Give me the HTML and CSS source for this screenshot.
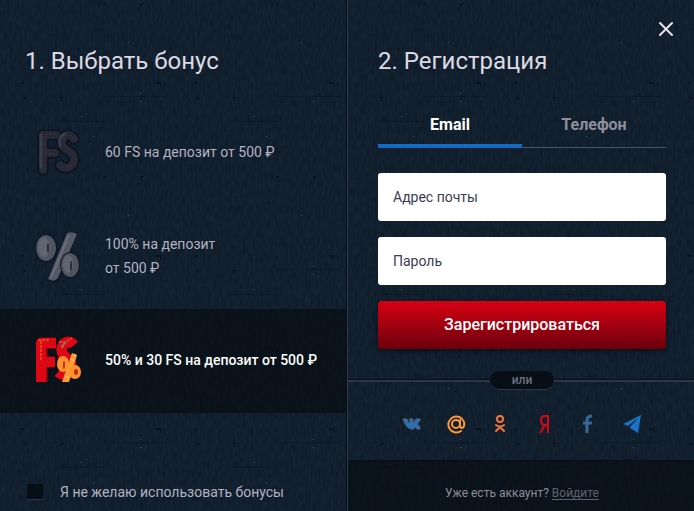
FILE: index.html
```html
<!DOCTYPE html>
<html lang="ru">
<head>
<meta charset="utf-8">
<meta name="viewport" content="width=device-width, initial-scale=1">
<title>Регистрация</title>
<link rel="stylesheet" href="styles.css">
</head>
<body>
<main class="modal">
  <section class="panel bonuses">
    <h2 class="title">1. Выбрать бонус</h2>
    <div class="options">
      <button type="button" class="option">
        <svg class="option-icon" viewBox="0 0 56 56" aria-hidden="true">
          <g fill="none" stroke-linecap="round" stroke-linejoin="round">
            <g stroke="#0b131d" stroke-width="11"><path d="M14 46V11H27M14 29H26"/><path d="M45 15C40 8 32 11 33 20C34 27 45 26 45 35C45 44 36 46 31 41"/></g>
            <g stroke="#232a36" stroke-width="8"><path d="M14 46V11H27M14 29H26"/><path d="M45 15C40 8 32 11 33 20C34 27 45 26 45 35C45 44 36 46 31 41"/></g>
            <g stroke="#373d4a" stroke-width="3"><path d="M12 43V11"/><path d="M31 22C30 15 32 11 36 10"/></g>
            <g stroke="#6b252c" stroke-width="1" stroke-dasharray="1 3"><path d="M16 45V10H27M16 30H27"/><path d="M45 14C39 8 34 13 35 20C37 27 47 27 46 36C45 43 37 45 32 41"/></g>
          </g>
        </svg>
        <span>60 FS на депозит от 500 ₽</span>
      </button>
      <button type="button" class="option">
        <svg class="option-icon" viewBox="0 0 56 56" aria-hidden="true">
          <path d="M37 4L49 4L30 53Q25 56 18 53Z" fill="#0c141e"/>
          <path d="M38 5Q44 3 48 6L29 50Q25 55 19 51Z" fill="#535965"/>
          <path d="M40 7L22 50" stroke="#676c78" stroke-width="2"/>
          <ellipse cx="17" cy="20" rx="11" ry="14" fill="#0c141e"/>
          <ellipse cx="17" cy="20" rx="10" ry="13" fill="#4e5460"/>
          <ellipse cx="15" cy="19" rx="6" ry="10" fill="#5f6571"/>
          <ellipse cx="19" cy="20" rx="1" ry="5" fill="#252b38"/>
          <ellipse cx="41" cy="37" rx="10" ry="13" fill="#0c141e"/>
          <ellipse cx="41" cy="37" rx="9" ry="12" fill="#4e5460"/>
          <ellipse cx="39" cy="36" rx="5" ry="9" fill="#5f6571"/>
          <ellipse cx="42" cy="38" rx="1" ry="5" fill="#252b38"/>
          <path d="M19 15v1M19 22v1M42 35v1M46 45v1" stroke="#8c2931" stroke-width="1"/>
        </svg>
        <span>100% на депозит<br>от 500 ₽</span>
      </button>
      <button type="button" class="option option-selected" aria-pressed="true">
        <svg class="option-icon" viewBox="0 0 56 56" aria-hidden="true">
          <g fill="none" stroke-linejoin="round">
            <g stroke="#a7000d" stroke-width="11"><path d="M13 50V11H27M13 30H26"/><path d="M45 13C39 6 31 12 33 20C35 28 44 26 42 36C41 43 35 45 29 40"/></g>
            <g stroke="#dc0816" stroke-width="10"><path d="M12 50V11H27M12 30H26"/><path d="M45 13C39 6 31 12 33 20C35 28 44 26 42 36C41 43 35 45 29 40"/></g>
            <path d="M9 8H20M12 9V29M30 10H37L43 6M36 10L33 17" stroke="#ec7825" stroke-width="1" stroke-dasharray="3 1"/>
            <path d="M32 15L37 10" stroke="#9a6570" stroke-width="2"/>
          </g>
          <path d="M43 21L48 23L40 50L33 50Z" fill="#ff9d35"/>
          <ellipse cx="34" cy="32" rx="6" ry="8" fill="#ff922e"/><ellipse cx="35" cy="33" rx="1" ry="4" fill="#b92d1b"/>
          <ellipse cx="46" cy="40" rx="6" ry="7" fill="#ff922e"/><ellipse cx="47" cy="40" rx="2" ry="3" fill="#b92d1b"/>
          <path d="M45 22L48 24M42 27L45 29M37 44L40 46" stroke="#ffe1a0" stroke-width="1" stroke-dasharray="2 1"/>
        </svg>
        <span>50% и 30 FS на депозит от 500 ₽</span>
      </button>
    </div>
    <label class="decline"><input type="checkbox">Я не желаю использовать бонусы</label>
  </section>

  <section class="panel register">
    <button type="button" class="close" aria-label="Закрыть">
      <svg viewBox="0 0 18 18"><path d="M3 3L15 15M15 3L3 15" fill="none" stroke="#e6e2ea" stroke-width="2" stroke-linecap="round"/></svg>
    </button>
    <h2 class="title">2. Регистрация</h2>
    <form class="form">
      <div class="tabs" role="tablist">
        <button type="button" class="tab tab-active" role="tab" aria-selected="true">Email</button>
        <button type="button" class="tab" role="tab" aria-selected="false">Телефон</button>
      </div>
      <input class="field" type="email" placeholder="Адрес почты" aria-label="Адрес почты">
      <input class="field" type="password" placeholder="Пароль" aria-label="Пароль">
      <button type="submit" class="submit">Зарегистрироваться</button>
    </form>
    <div class="divider"><span>или</span></div>
    <nav class="social">
      <a href="#vk" aria-label="ВКонтакте"><svg viewBox="0 0 20 20"><path d="M1 5H5Q7 10 8 10V6L7 5H11V9Q13 8 14 5H18Q19 6 15 10Q19 13 18 15H15L12 12V15H9Q4 14 1 5Z" fill="#2570b6" stroke="#56657c" stroke-width="1"/></svg></a>
      <a href="#mail" aria-label="Mail.ru"><svg viewBox="0 0 20 20"><g fill="none" stroke="#ff9838" stroke-width="2"><circle cx="10" cy="10" r="4"/><path d="M14 6V11Q14 14 16 14Q19 13 18 8A8 8 0 1 0 15 17" stroke-linecap="round"/></g></svg></a>
      <a href="#ok" aria-label="Одноклассники"><svg viewBox="0 0 20 20"><g fill="none" stroke="#f5763c" stroke-width="2" stroke-linecap="round"><circle cx="10" cy="5" r="3"/><path d="M6 11Q10 14 14 11M10 13L6 17M10 13L14 17"/></g></svg></a>
      <a href="#yandex" aria-label="Яндекс"><svg viewBox="0 0 20 20"><path d="M14 19V2H11Q7 2 7 6Q7 11 11 11H14M11 11L6 19" fill="none" stroke="#d30718" stroke-width="2"/></svg></a>
      <a href="#facebook" aria-label="Facebook"><svg viewBox="0 0 20 20"><path d="M9 19V6Q9 2 14 2M5 9H14" fill="none" stroke="#3a6795" stroke-width="3"/></svg></a>
      <a href="#telegram" aria-label="Telegram"><svg viewBox="0 0 20 20"><path d="M19 1L1 10L6 12L16 4L8 13V14L16 19Z" fill="#1973c4"/></svg></a>
    </nav>
    <footer class="footer">Уже есть аккаунт? <a href="#login">Войдите</a></footer>
  </section>
</main>
</body>
</html>
```

FILE: styles.css
```css
* { box-sizing: border-box; }

body {
  margin: 0;
  background: #11202f;
  color: #b3b2c1;
  font-family: Roboto, "Liberation Sans", sans-serif;
}

button { font: inherit; color: inherit; border: 0; background: none; cursor: pointer; }

.modal { display: flex; min-height: 100vh; }

.panel {
  position: relative;
  flex: 1 1 0;
  min-width: 0;
  display: flex;
  flex-direction: column;
  background-color: #142331;
  background-image:
    url("data:image/svg+xml,%3Csvg xmlns='http://www.w3.org/2000/svg' width='173' height='173'%3E%3Cfilter id='n' x='0' y='0' width='100%25' height='100%25' color-interpolation-filters='sRGB'%3E%3CfeTurbulence type='fractalNoise' baseFrequency='.4 .12' numOctaves='4' seed='4' stitchTiles='stitch'/%3E%3CfeColorMatrix values='0 0 0 0 .04 0 0 0 0 .08 0 0 0 0 .14 1.2 0 0 0 -.35'/%3E%3C/filter%3E%3Crect width='173' height='173' filter='url(%23n)'/%3E%3Cg fill='%23070d14' opacity='.8'%3E%3Cpath d='M103 3h3v2h-3zM140 3h4v1h-2v3h-1zM24 97h2v2h-2zM60 97h4v1h-2v3h-1zM22 82h2v2h-2zM156 82h5v5h-1v-3h-4z'/%3E%3C/g%3E%3Cpath d='M104 96.5h62M60 121.5h44' stroke='%2309131e' opacity='.6'/%3E%3Cpath d='M128 42h1v1h-1zM140 93h1v1h-1zM140 101h1v1h-1zM81 116h1v1h-1zM93 136h1v1h-1z' fill='%233c4b5b'/%3E%3C/svg%3E");
}

.bonuses { border-right: 1px solid #070d15; }
.register { border-left: 1px solid #313a48; background-position: -28px 0; }

.title {
  margin: 0;
  padding: 45px 25px 24px;
  color: #ddd9e3;
  font-size: 24px;
  font-weight: 400;
  line-height: 32px;
}
.register .title { padding-left: 30px; padding-right: 28px; }

.option {
  display: flex;
  align-items: center;
  gap: 20px;
  width: 100%;
  min-height: 104px;
  padding: 0 10px 2px 29px;
  font-size: 14px;
  line-height: 24px;
  text-align: left;
}
.option-icon { flex: none; width: 56px; height: 56px; }
.option-selected { background: rgba(7, 12, 17, .68); color: #fff; font-weight: 500; }

.decline {
  display: flex;
  align-items: center;
  gap: 17px;
  margin-top: auto;
  padding: 0 27px 7px;
  font-size: 14px;
  line-height: 24px;
}
.decline input {
  appearance: none;
  width: 16px;
  height: 16px;
  margin: 0;
  background: #080e16;
  border-bottom: 1px solid #2c3542;
}

.close { position: absolute; top: 20px; right: 19px; padding: 0; width: 18px; height: 18px; }
.close svg { display: block; width: 18px; height: 18px; }

.form { display: flex; flex-direction: column; gap: 16px; padding: 0 28px 0 30px; }

.tabs { display: flex; margin-bottom: 9px; border-bottom: 1px solid #4b5260; }
.tab {
  flex: 1;
  height: 47px;
  padding: 4px 0 0;
  border-bottom: 4px solid transparent;
  margin-bottom: -1px;
  color: #8f8f9c;
  font-size: 16px;
  font-weight: 700;
}
.tab-active { border-bottom-color: #146cc2; border-radius: 2px; color: #fff; }

.field {
  width: 100%;
  height: 48px;
  padding: 0 15px;
  border: 0;
  border-radius: 3px;
  background: #fff;
  color: #2f2f43;
  font: 14px Roboto, "Liberation Sans", sans-serif;
}
.field::placeholder { color: #3c3b50; opacity: 1; }

.submit {
  height: 48px;
  padding: 0 0 2px;
  border-radius: 4px;
  background: linear-gradient(#d70012, #6b000d);
  box-shadow: 0 2px 5px rgba(0, 0, 0, .5);
  color: #fff;
  font-size: 16px;
  font-weight: 500;
}

.divider { display: flex; align-items: center; margin-top: 22px; }
.divider::before, .divider::after {
  content: "";
  flex: 1;
  height: 2px;
  border-top: 1px solid #080f18;
  background: #2d3745;
}
.divider::before { flex-basis: 2px; }
.divider span {
  width: 64px;
  border-radius: 9px;
  border-bottom: 1px solid #303947;
  background: #080e16;
  color: #697181;
  font-size: 12px;
  font-weight: 500;
  line-height: 18px;
  text-align: center;
}

.social { display: flex; justify-content: center; gap: 24px; padding: 24px 28px 26px 30px; }
.social a, .social svg { display: block; width: 20px; height: 20px; }

.footer {
  flex: 1;
  padding: 24px 28px 10px 30px;
  border-top: 1px solid #080e16;
  background: rgba(7, 12, 18, .65);
  color: #8b8e9c;
  font-size: 12px;
  line-height: 16px;
  text-align: center;
}
.footer a { color: #5b6372; text-decoration: underline; text-underline-offset: 2px; }
```
